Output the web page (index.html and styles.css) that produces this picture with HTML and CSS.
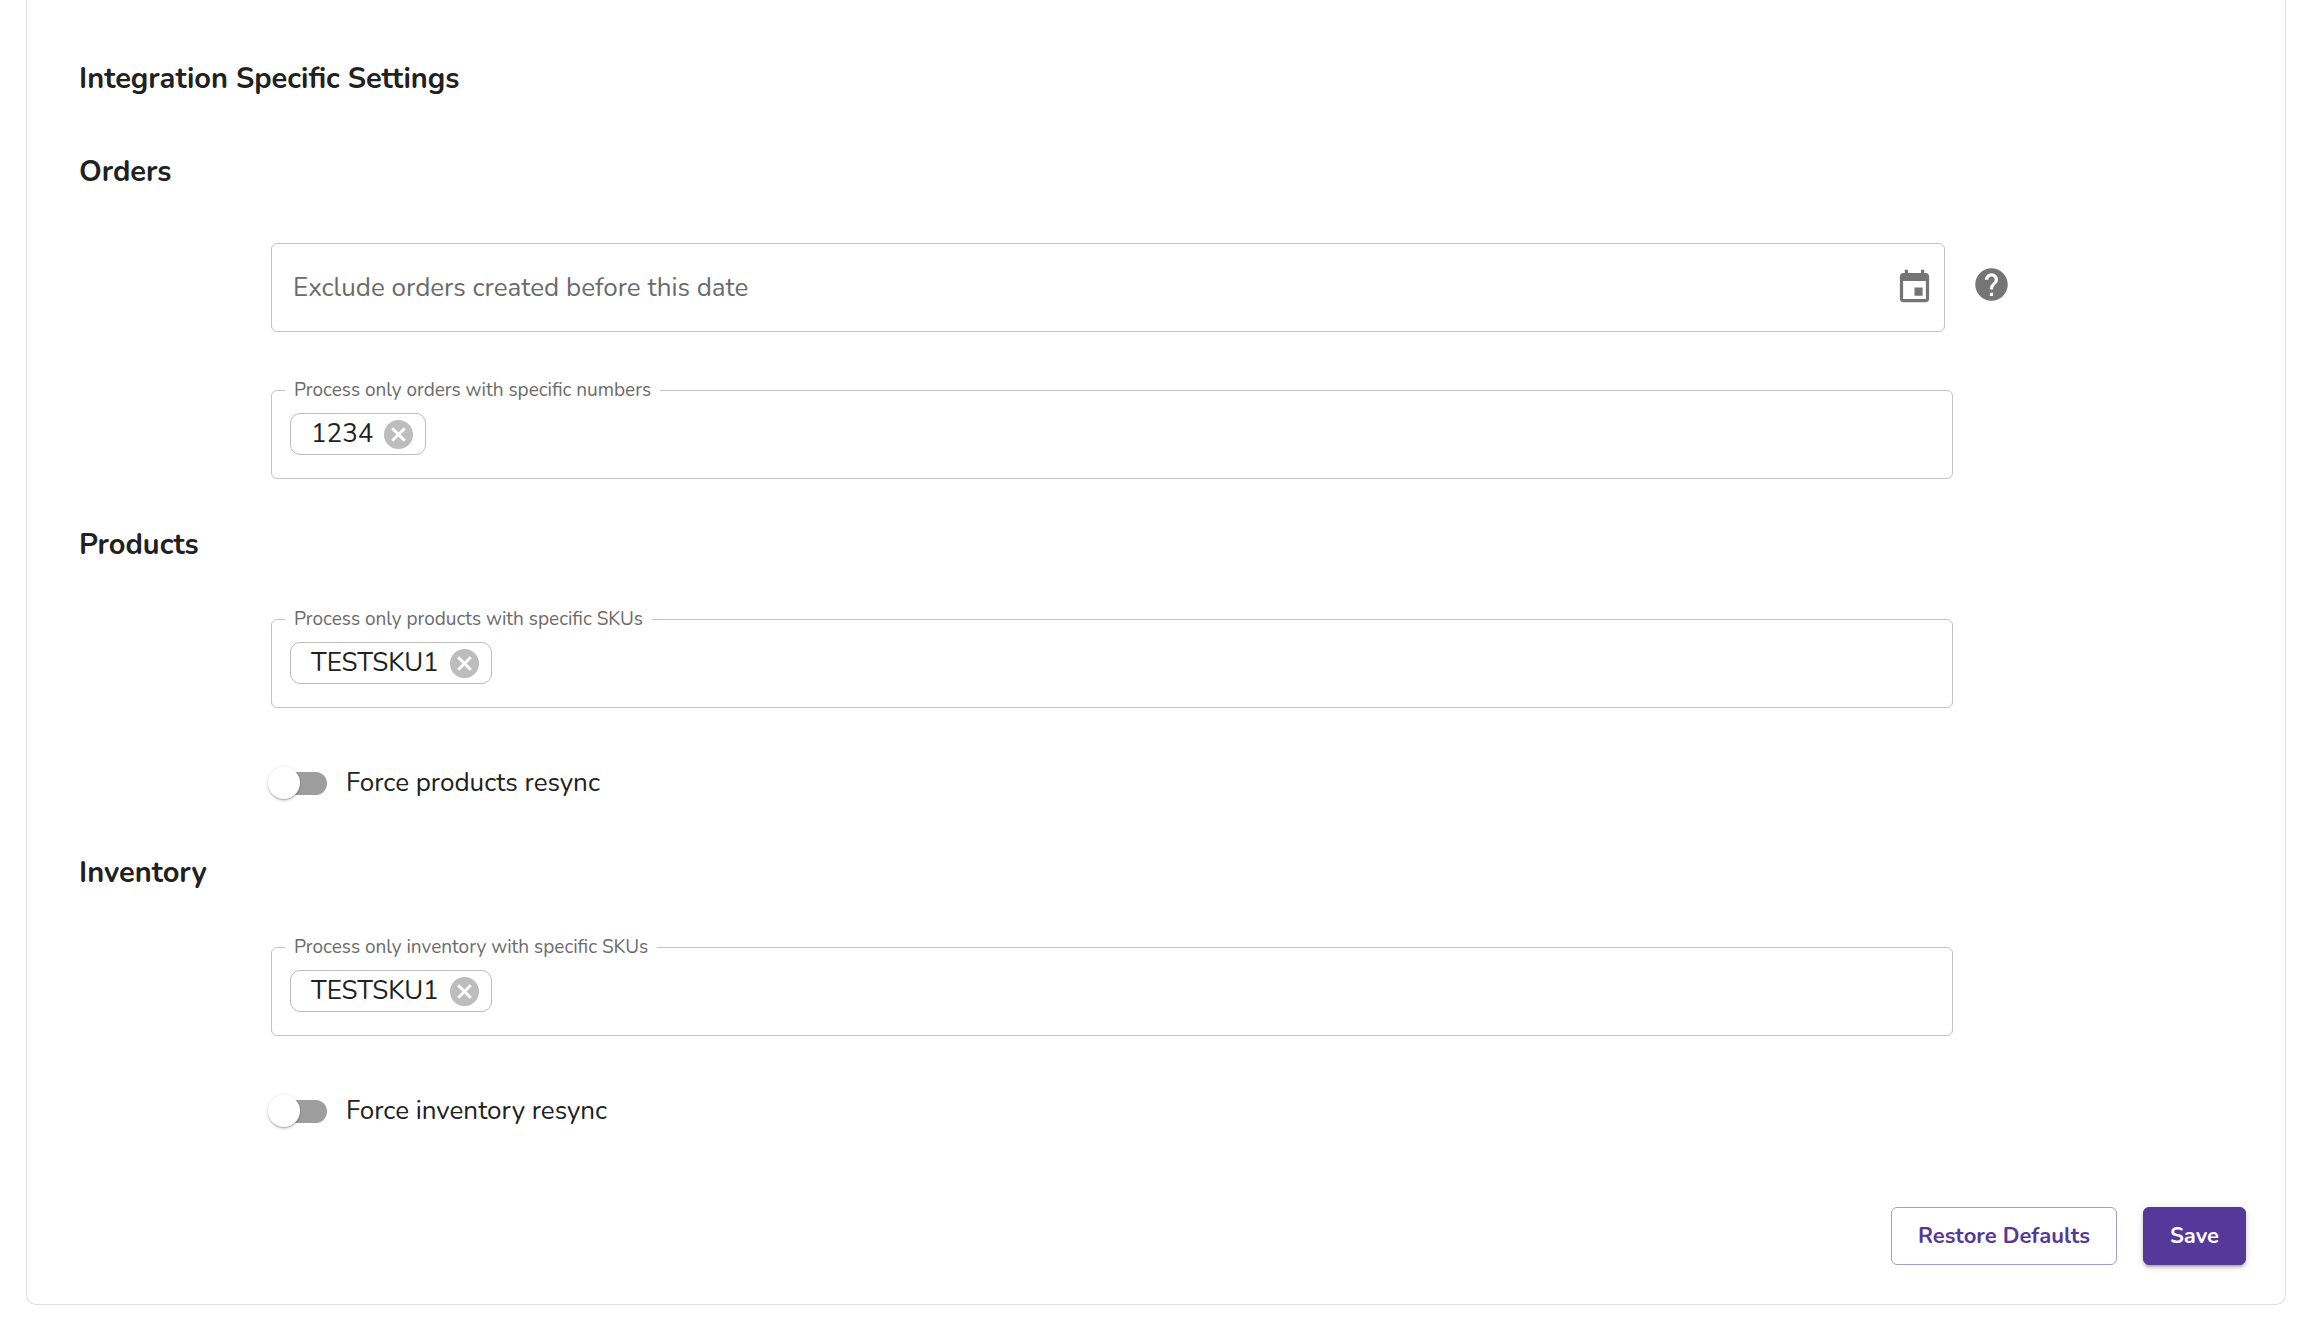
FILE: index.html
```
<!DOCTYPE html>
<html lang="en">
<head>
    <meta charset="utf-8">
    <meta name="viewport" content="width=device-width">
    <title>Integration Settings</title>
    <link rel="stylesheet" href="styles.css">
</head>
<body>
    <form class="card">
        <h2>Integration Specific Settings</h2>

        <section>
            <h3>Orders</h3>
            <div class="rows">
                <div class="date-row">
                    <div class="date-field">
                        <input type="text" id="before" aria-label="Exclude orders created before this date" placeholder="Exclude orders created before this date">
                        <button type="button" class="icon" aria-label="Choose date">
                            <svg viewBox="0 0 24 24"><path d="M17 12h-5v5h5v-5zM16 1v2H8V1H6v2H5c-1.11 0-1.99.9-1.99 2L3 19c0 1.1.89 2 2 2h14c1.1 0 2-.9 2-2V5c0-1.1-.9-2-2-2h-1V1h-2zm3 18H5V8h14v11z"/></svg>
                        </button>
                    </div>
                    <button type="button" class="icon help" aria-label="Help">
                        <svg viewBox="0 0 24 24"><path d="M12 2C6.48 2 2 6.48 2 12s4.48 10 10 10 10-4.48 10-10S17.52 2 12 2zm1 17h-2v-2h2v2zm2.07-7.75l-.9.92C13.45 12.9 13 13.5 13 15h-2v-.5c0-1.1.45-2.1 1.17-2.83l1.24-1.26c.37-.36.59-.86.59-1.41 0-1.1-.9-2-2-2s-2 .9-2 2H8c0-2.21 1.79-4 4-4s4 1.79 4 4c0 .88-.36 1.68-.93 2.25z"/></svg>
                    </button>
                </div>
                <fieldset class="field">
                    <legend><label for="orders">Process only orders with specific numbers</label></legend>
                    <span class="chip">1234
                        <button type="button" aria-label="Remove 1234">
                            <svg viewBox="0 0 24 24"><path d="M12 2C6.47 2 2 6.47 2 12s4.47 10 10 10 10-4.47 10-10S17.53 2 12 2zm5 13.59L15.59 17 12 13.41 8.41 17 7 15.59 10.59 12 7 8.41 8.41 7 12 10.59 15.59 7 17 8.41 13.41 12 17 15.59z"/></svg>
                        </button>
                    </span>
                    <input type="text" id="orders">
                </fieldset>
            </div>
        </section>

        <section>
            <h3>Products</h3>
            <div class="rows">
                <fieldset class="field">
                    <legend><label for="products">Process only products with specific SKUs</label></legend>
                    <span class="chip">TESTSKU1
                        <button type="button" aria-label="Remove TESTSKU1">
                            <svg viewBox="0 0 24 24"><path d="M12 2C6.47 2 2 6.47 2 12s4.47 10 10 10 10-4.47 10-10S17.53 2 12 2zm5 13.59L15.59 17 12 13.41 8.41 17 7 15.59 10.59 12 7 8.41 8.41 7 12 10.59 15.59 7 17 8.41 13.41 12 17 15.59z"/></svg>
                        </button>
                    </span>
                    <input type="text" id="products">
                </fieldset>
                <div class="toggle">
                    <input type="checkbox" id="resync-products">
                    <label for="resync-products">Force products resync</label>
                </div>
            </div>
        </section>

        <section>
            <h3>Inventory</h3>
            <div class="rows">
                <fieldset class="field">
                    <legend><label for="inventory">Process only inventory with specific SKUs</label></legend>
                    <span class="chip">TESTSKU1
                        <button type="button" aria-label="Remove TESTSKU1">
                            <svg viewBox="0 0 24 24"><path d="M12 2C6.47 2 2 6.47 2 12s4.47 10 10 10 10-4.47 10-10S17.53 2 12 2zm5 13.59L15.59 17 12 13.41 8.41 17 7 15.59 10.59 12 7 8.41 8.41 7 12 10.59 15.59 7 17 8.41 13.41 12 17 15.59z"/></svg>
                        </button>
                    </span>
                    <input type="text" id="inventory">
                </fieldset>
                <div class="toggle">
                    <input type="checkbox" id="resync-inventory">
                    <label for="resync-inventory">Force inventory resync</label>
                </div>
            </div>
        </section>

        <div class="actions">
            <button type="reset" class="btn">Restore Defaults</button>
            <button type="submit" class="btn primary">Save</button>
        </div>
    </form>
</body>
</html>
```
FILE: styles.css
```
* { box-sizing: border-box; }
body {
    margin: 0 30px 0 26px;
    background: #ffffff;
    color: #212121;
    font-family: Nunito, Lato, sans-serif;
    font-size: 26px;
    line-height: 36px;
}
input, button { font: inherit; color: inherit; }
button { cursor: pointer; }
svg { display: block; width: 100%; fill: currentColor; }

.card {
    padding: 61px 39px 39px 52px;
    border: 1px solid #e0e0e0;
    border-top: 0;
    border-radius: 0 0 10px 10px;
}
h2, h3 {
    margin: 0;
    font-size: 29px;
    font-weight: bold;
    line-height: 36px;
}
h2 { margin-bottom: 57px; }
section { margin-bottom: 48px; }

/* the last column holds the help icon */
.rows {
    display: grid;
    grid-template-columns: 1fr 58px;
    row-gap: 46px;
    margin: 44px 235px 0 192px;
}
.date-row {
    grid-column: 1 / 3;
    display: flex;
    gap: 27px;
    margin-top: 9px;
}
.date-field {
    flex: 1;
    display: flex;
    align-items: center;
    height: 89px;
    padding: 0 10px 0 21px;
    border: 1px solid #c4c4c4;
    border-radius: 6px;
}
.date-field input, .field input {
    flex: 1;
    min-width: 0;
    padding: 0;
    border: 0;
    outline: 0;
    background: none;
}
.date-field input::placeholder { color: #6b6b6b; opacity: 1; }
.icon {
    width: 39px;
    height: 39px;
    padding: 0;
    border: 0;
    background: none;
    color: #757575;
}
.help { margin-top: 22px; }

.field {
    grid-column: 1;
    display: flex;
    align-items: flex-start;
    gap: 12px;
    min-width: 0;
    height: 101px;
    margin: 0;
    padding: 11px 18px 0;
    border: 1px solid #c4c4c4;
    border-radius: 6px;
}
.field legend {
    margin-left: -5px;
    padding: 0 9px;
    color: #6b6b6b;
    font-size: 19px;
    line-height: 24px;
}
.chip {
    display: flex;
    align-items: center;
    gap: 8px;
    height: 42px;
    padding: 0 9px 0 20px;
    border: 1px solid #bdbdbd;
    border-radius: 10px;
}
.chip button {
    width: 35px;
    height: 35px;
    padding: 0;
    border: 0;
    background: none;
    color: #bdbdbd;
}

.toggle {
    grid-column: 1;
    display: flex;
    align-items: center;
    gap: 19px;
    height: 48px;
    margin-top: 5px;
}
.toggle input {
    appearance: none;
    display: flex;
    align-items: center;
    width: 52px;
    height: 23px;
    margin: 0 0 0 4px;
    border-radius: 12px;
    background: #9e9e9e;
}
.toggle input::before {
    content: "";
    flex: none;
    width: 32px;
    height: 32px;
    margin-left: -7px;
    border-radius: 50%;
    background: #ffffff;
    box-shadow: 0 2px 2px -1px rgba(0,0,0,.2), 0 1px 2px rgba(0,0,0,.14), 0 1px 4px rgba(0,0,0,.12);
}
.toggle input:checked { justify-content: flex-end; background: #a99bcc; }
.toggle input:checked::before { margin-right: -7px; background: #54389a; }

.actions {
    display: flex;
    justify-content: flex-end;
    gap: 26px;
    margin-top: 72px;
}
.btn {
    height: 58px;
    padding: 0 26px;
    border: 1px solid #a99bcc;
    border-radius: 6px;
    background: #ffffff;
    color: #54389a;
    font-size: 22px;
    font-weight: bold;
}
.primary {
    border-color: #54389a;
    background: #54389a;
    color: #ffffff;
    box-shadow: 0 4px 2px -3px rgba(0,0,0,.2), 0 3px 3px rgba(0,0,0,.14), 0 1px 8px rgba(0,0,0,.12);
}
```
